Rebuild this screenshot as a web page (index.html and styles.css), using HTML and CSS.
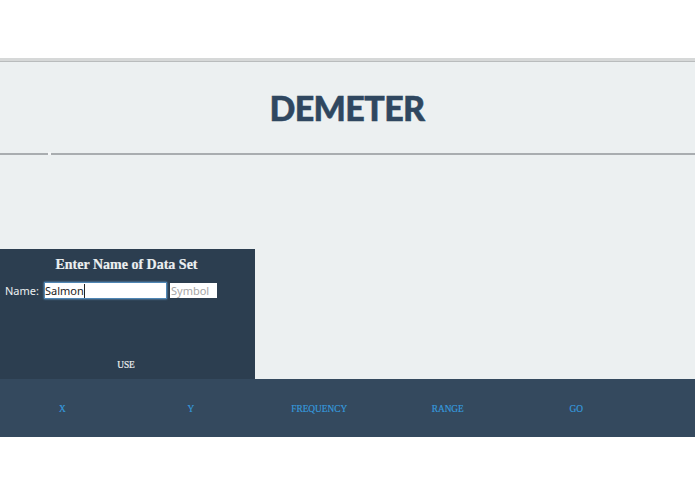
FILE: index.html
```html
<!DOCTYPE html>
<html lang="en">
<head>
<meta charset="utf-8">
<title>Demeter</title>
<link rel="stylesheet" href="styles.css">
</head>
<body>
<main class="app">
  <header class="header"><h1 class="logo">DEMETER</h1></header>
  <section class="content">
    <form class="panel">
      <h2 class="panel-title">Enter Name of Data Set</h2>
      <div class="field-row">
        <label class="field-label" for="name">Name:</label>
        <span class="name-box"><span class="typed">Salmon</span><span class="caret"></span></span>
        <input class="symbol" id="symbol" type="text" placeholder="Symbol">
      </div>
      <div class="use">USE</div>
    </form>
  </section>
  <nav class="nav">
    <a class="nav-item">X</a>
    <a class="nav-item">Y</a>
    <a class="nav-item">FREQUENCY</a>
    <a class="nav-item">RANGE</a>
    <a class="nav-item">GO</a>
  </nav>
</main>
</body>
</html>
```
FILE: styles.css
```css
* { box-sizing: border-box; }
html, body { margin: 0; padding: 0; background: #fff; }
body { height: 494px; overflow: hidden; font-family: "Liberation Serif", serif; }
.app { padding-top: 58px; }
.header {
  height: 97px;
  background: #ecf0f1;
  border-top: 3px solid #d6d8d8;
  border-bottom: 2px solid #a9adb0;
  box-shadow: inset 0 2px 0 -1px #b9bcbd;
  display: flex;
  align-items: center;
  justify-content: center;
  padding-top: 2px;
  position: relative;
}
.header::after {
  content: "";
  position: absolute;
  left: 48px;
  bottom: -2px;
  width: 3px;
  height: 3px;
  background: #f4f6f7;
}
.logo {
  margin: 0 0 0 -1px;
  font-family: "Lato", sans-serif;
  font-weight: 900;
  font-size: 34px;
  line-height: 1;
  letter-spacing: -0.6px;
  color: #2f4760;
  -webkit-text-stroke: 0.5px #2f4760;
}
.content { height: 224px; background: #ecf0f1; display: flex; align-items: flex-end; }
.panel {
  width: 255px;
  height: 130px;
  background: #2c3e50;
  color: #ecf0f1;
  display: flex;
  flex-direction: column;
}
.panel-title {
  margin: 7px 0 0 -2px;
  font-size: 14px;
  line-height: 17px;
  font-weight: 700;
  text-align: center;
  -webkit-text-stroke: 0.2px #ecf0f1;
}
.field-row {
  display: flex;
  align-items: center;
  margin-top: 9px;
  padding-left: 5px;
  font-family: "Noto Sans", sans-serif;
  font-size: 11px;
}
.field-label { width: 39px; color: #ecf0f1; }
.name-box {
  width: 123px;
  height: 17px;
  background: #fff;
  border: 1px solid #4f86b4;
  box-shadow: 0 0 2px #6ea6d6;
  color: #1c1c1c;
  display: flex;
  align-items: center;
}
.caret { width: 1px; height: 14px; background: #222; }
.symbol {
  width: 47px;
  height: 15px;
  margin-left: 3px;
  padding: 0 0 0 1px;
  border: 0;
  background: #fff;
  font-family: "Noto Sans", sans-serif;
  font-size: 11px;
  outline: 0;
}
.symbol::placeholder { color: #a5a5a5; opacity: 1; }
.use {
  margin-top: auto;
  margin-bottom: 8px;
  margin-left: -3px;
  text-align: center;
  font-size: 9.33px;
  line-height: 12px;
  color: #ecf0f1;
  -webkit-text-stroke: 0.2px #ecf0f1;
}
.nav {
  height: 58px;
  width: calc(100% + 2px);
  margin-left: -2px;
  padding-top: 2px;
  background: #34495e;
  display: grid;
  grid-template-columns: repeat(5, 128.5px);
  align-items: center;
  justify-items: center;
}
.nav-item {
  font-size: 9.33px;
  line-height: 12px;
  color: #3498db;
  -webkit-text-stroke: 0.2px #3498db;
}
```
